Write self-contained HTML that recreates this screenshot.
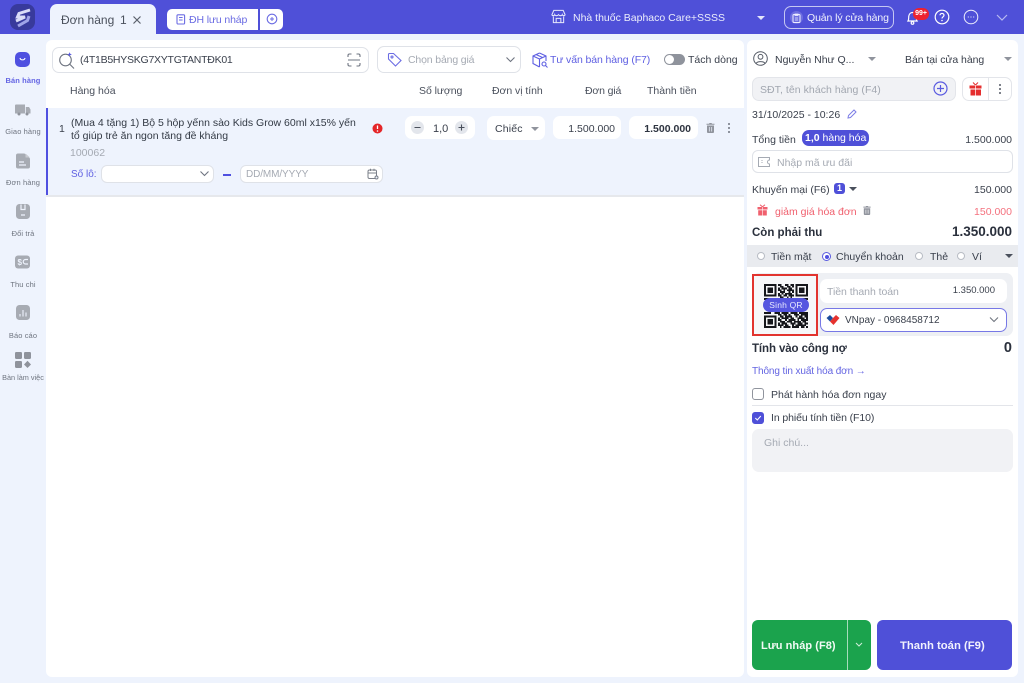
<!DOCTYPE html>
<html lang="vi"><head><meta charset="utf-8"><title>Đơn hàng</title>
<style>
*{box-sizing:border-box}
html,body{margin:0;padding:0}
body{width:1024px;height:683px;overflow:hidden;position:relative;background:#eef3fd;font-family:"Liberation Sans","Noto Sans CJK SC",sans-serif;color:#333a45;font-size:11px}
.a,.t{position:absolute}
.t{white-space:nowrap;line-height:14px;letter-spacing:0}
svg{position:absolute;display:block}
.box{position:absolute;background:#fff;border-radius:6px}
.s{color:#6f7580;font-size:7.5px;text-align:center;width:46px;left:0;letter-spacing:.1px}
.g{color:#a5aab3}
.r{text-align:right}
.b{font-weight:bold}
</style></head><body>
<div class="a" style="left:0;top:0;width:1024px;height:34px;background:#4f50d8"></div>
<div class="a" style="left:10px;top:4px;width:25px;height:26px;border-radius:8px;background:#383a9c"></div>
<svg style="left:10px;top:4px" width="25" height="26" viewBox="0 0 25 26"><path d="M20 6 L9 9.500 L7.500 13 L15 13 L6 17" fill="none" stroke="#d9dcf7" stroke-width="3"/><path d="M19 12 L17.500 16.500 L8 22" fill="none" stroke="#9fa3e8" stroke-width="3"/></svg>
<div class="a" style="left:50px;top:4px;width:106px;height:31px;background:#eef3fd;border-radius:7px 7px 0 0"></div>
<div class="t" style="left:61px;top:13px;font-size:12px;color:#4a505c">Đơn hàng</div>
<div class="t" style="left:120px;top:13px;font-size:12px;color:#4a505c">1</div>
<svg style="left:131px;top:14px" width="12" height="12" viewBox="0 0 12 12"><path d="M2.500 2.500 9.500 9.500M9.500 2.500 2.500 9.500" stroke="#5a606c" stroke-width="1.200"/></svg>
<div class="box" style="left:167px;top:9px;width:91px;height:21px;border-radius:5px 0 0 5px"></div>
<div class="box" style="left:260px;top:9px;width:23px;height:21px;border-radius:0 5px 5px 0"></div>
<svg style="left:176px;top:14px" width="10" height="11" viewBox="0 0 10 11"><rect x="1" y=".8" width="7.600" height="9.200" rx="1" fill="none" stroke="#6b6ce3" stroke-width="1.100"/><path d="M3 3.500H6.600M3 6H6.600" stroke="#6b6ce3"/></svg>
<div class="t" style="left:189px;top:13px;font-size:10.500px;color:#6b6ce3;letter-spacing:-.12px">ĐH lưu nháp</div>
<svg style="left:266px;top:13px" width="12" height="12" viewBox="0 0 12 12"><circle cx="6" cy="6" r="4.800" fill="none" stroke="#6b6ce3" stroke-width="1.100"/><path d="M4 6H8M6 4V8" stroke="#6b6ce3"/></svg>

<svg style="left:551px;top:9px" width="15" height="15" viewBox="0 0 16 16" fill="none" stroke="#e6e8fb" stroke-width="1.100"><path d="M3 1.500H13L15 6C15 7.500 12.500 7.500 12 6C11.500 7.500 9 7.500 8 6C7 7.500 4.500 7.500 4 6C3.500 7.500 1 7.500 1 6Z"/><path d="M2.500 8V14.500H13.500V8M5.500 14.500V10H10.500V14.500"/></svg>
<div class="t" style="left:573px;top:11px;font-size:10.500px;color:#eceefc">Nhà thuốc Baphaco Care+SSSS</div>
<div class="a" style="left:757px;top:16px;border:4px solid transparent;border-top:4px solid #e4e6fa;border-bottom:0"></div>
<div class="a" style="left:784px;top:6px;width:110px;height:23px;border:1px solid #c5c7f2;border-radius:7px"></div>
<div class="a" style="left:790px;top:11px;width:13px;height:13px;border-radius:50%;background:#6e6fe0"></div>
<svg style="left:792px;top:13px" width="9" height="10" viewBox="0 0 9 10"><rect x="1" y="1.500" width="7" height="8" rx="1" fill="none" stroke="#eef" /><path d="M3 1H6V2.500H3ZM3 5H6M3 7H6" stroke="#eef" fill="#eef" stroke-width=".8"/></svg>
<div class="t" style="left:807px;top:11px;font-size:10.500px;color:#f1f2fd;letter-spacing:-.1px">Quản lý cửa hàng</div>
<svg style="left:906px;top:10px" width="13" height="15" viewBox="0 0 13 15" fill="none" stroke="#fff" stroke-width="1.200"><path d="M2 11C3 9.500 2.500 8 2.800 6C3.200 3.500 5 2.500 6.500 2.500S9.800 3.500 10.200 6C10.500 8 10 9.500 11 11Z"/><circle cx="6.500" cy="13" r="1.300"/></svg>
<div class="a b" style="left:913px;top:8px;width:16px;height:12px;background:#ee2230;border-radius:6px;color:#fff;font-size:7px;line-height:12px;text-align:center">99+</div>
<svg style="left:934px;top:9px" width="16" height="16" viewBox="0 0 16 16"><circle cx="8" cy="8" r="6.800" fill="none" stroke="#fff" stroke-width="1.200"/><path d="M6 6.300C6 3.800 10 3.900 10 6.300C10 7.800 8 7.800 8 9.500" fill="none" stroke="#fff" stroke-width="1.200"/><circle cx="8" cy="11.500" r=".8" fill="#fff"/></svg>
<svg style="left:963px;top:9px" width="16" height="16" viewBox="0 0 16 16"><circle cx="8" cy="8" r="6.800" fill="none" stroke="#f0f1fd" stroke-width="1"/><path d="M4.800 8H5.800M7.500 8H8.500M10.200 8H11.200" stroke="#f0f1fd" stroke-width="1.100"/></svg>
<svg style="left:995px;top:13px" width="14" height="9" viewBox="0 0 14 9"><path d="M2 2 7 7 12 2" fill="none" stroke="#b8baf0" stroke-width="1.200"/></svg>

<!-- sidebar -->
<div class="a" style="left:15px;top:52px;width:15px;height:15px;border-radius:5px;background:#4f50e0"></div>
<svg style="left:15px;top:52px" width="15" height="15" viewBox="0 0 15 15"><path d="M5 6C5.500 8.500 9.500 8.500 10 6" fill="none" stroke="#fff" stroke-width="1.100"/></svg>
<div class="t s b" style="top:74px;color:#6465e4">Bán hàng</div>
<svg style="left:15px;top:103px" width="16" height="14" viewBox="0 0 16 14"><path d="M0 2.500Q0 1.500 1 1.500H10V10.500H0ZM10.800 4H14L15.500 6.500V10.500H10.800Z" fill="#a7abb3"/><circle cx="4" cy="11" r="1.500" fill="#8f939c"/><circle cx="12" cy="11" r="1.500" fill="#8f939c"/></svg>
<div class="t s" style="top:125px">Giao hàng</div>
<svg style="left:16px;top:153px" width="14" height="16" viewBox="0 0 14 16"><path d="M2 .5H8.500L14 5.500V13.500Q14 15.500 12 15.500H2Q0 15.500 0 13.500V2.500Q0 .5 2 .5Z" fill="#a7abb3"/><path d="M3 9H8M3 12H10" stroke="#eef3fd" stroke-width="1.200"/><path d="M9.500 .5V4.500H14" fill="#c8cbd1"/></svg>
<div class="t s" style="top:176px">Đơn hàng</div>
<svg style="left:16px;top:204px" width="14" height="15" viewBox="0 0 14 15"><rect width="14" height="15" rx="3.500" fill="#a7abb3"/><path d="M5 .5V5.500H9V.5M5 11H9" stroke="#eef3fd" stroke-width="1.200" fill="none"/></svg>
<div class="t s" style="top:227px">Đổi trả</div>
<svg style="left:15px;top:255px" width="15" height="14" viewBox="0 0 15 14"><rect width="15" height="13" y=".5" rx="3" fill="#a7abb3"/><text x="2.500" y="10" font-size="8" font-weight="bold" fill="#eef3fd" font-family="Liberation Sans">$</text><path d="M13 4.500H10.500A2 2 0 0 0 10.500 9H13" fill="none" stroke="#eef3fd" stroke-width="1.200"/></svg>
<div class="t s" style="top:278px">Thu chi</div>
<svg style="left:16px;top:305px" width="14" height="15" viewBox="0 0 14 15"><rect width="14" height="15" rx="3.500" fill="#a7abb3"/><path d="M4 9V11.500M7 5V11.500M10 7.500V11.500" stroke="#eef3fd" stroke-width="1.100"/></svg>
<div class="t s" style="top:329px">Báo cáo</div>
<svg style="left:15px;top:352px" width="16" height="16" viewBox="0 0 16 16" fill="#8f939c"><rect width="7" height="7" rx="1.200"/><rect x="9" width="7" height="7" rx="1.200"/><rect y="9" width="7" height="7" rx="1.200"/><path d="M12.500 8.800 16 12.500 12.500 16 9 12.500Z"/></svg>
<div class="t s" style="top:371px;font-size:7.300px;letter-spacing:0">Bàn làm việc</div>

<!-- main -->
<div class="box" style="left:46px;top:40px;width:698px;height:637px"></div>
<div class="a" style="left:52px;top:47px;width:317px;height:26px;border:1px solid #dfe2e8;border-radius:7px;background:#fff"></div>
<svg style="left:58px;top:50px" width="20" height="20" viewBox="0 0 20 20" fill="none" stroke="#6e7480" stroke-width="1.100"><circle cx="7.500" cy="10" r="5.800"/><path d="M11.800 14.200 16 18.500"/><path d="M14 1.500 15 4 17.500 5 15 6 14 8.500 13 6 10.500 5 13 4Z" fill="#5a5be0" stroke="none" transform="translate(2.500 1.200) scale(.65)"/></svg>
<div class="t" style="left:80px;top:53px;font-size:10.500px;color:#3a404c;letter-spacing:-.25px">(4T1B5HYSKG7XYTGTANTĐK01</div>
<svg style="left:347px;top:53px" width="14" height="14" viewBox="0 0 14 14" fill="none" stroke="#6e7480" stroke-width="1.100"><path d="M1 4V2.500Q1 1 2.500 1H4.500M9.500 1H11.500Q13 1 13 2.500V4M1 10V11.500Q1 13 2.500 13H4.500M9.500 13H11.500Q13 13 13 11.500V10M1 7H13"/></svg>
<div class="a" style="left:377px;top:46px;width:144px;height:27px;border:1px solid #dfe2e8;border-radius:7px"></div>
<svg style="left:387px;top:52px" width="15" height="15" viewBox="0 0 15 15" fill="none" stroke="#6b6ce3" stroke-width="1.100"><path d="M1.500 2.500Q1.500 1.500 2.500 1.500H6.500L14 8.500 8.500 14 1.500 7Z"/><circle cx="5" cy="5" r="1"/></svg>
<div class="t g" style="left:408px;top:53px;font-size:10.500px;letter-spacing:-.15px">Chọn bảng giá</div>
<svg style="left:505px;top:56px" width="11" height="8" viewBox="0 0 11 8"><path d="M1.500 1.500 5.500 5.500 9.500 1.500" fill="none" stroke="#6e7480" stroke-width="1.100"/></svg>
<svg style="left:532px;top:52px" width="17" height="16" viewBox="0 0 17 16" fill="none" stroke="#5e5fe2" stroke-width="1.100"><path d="M7.500 1 14 4V9M7.500 1 1 4V11.500L7.500 15M1 4 7.500 7 14 4M7.500 7V15M4 2.500 10.500 5.500"/><circle cx="12" cy="12" r="2"/><path d="M13.500 13.500 15.500 15.500"/></svg>
<div class="t" style="left:550px;top:53px;font-size:10.500px;color:#5e5fe2;letter-spacing:-.1px">Tư vấn bán hàng (F7)</div>
<div class="a" style="left:664px;top:54px;width:21px;height:11px;border-radius:6px;background:#8f939c"></div>
<div class="a" style="left:665px;top:55px;width:9px;height:9px;border-radius:50%;background:#fff"></div>
<div class="t" style="left:688px;top:53px;font-size:10.500px;color:#3a404c">Tách dòng</div>

<div class="t" style="left:70px;top:84px;font-size:10.500px;color:#4a505c">Hàng hóa</div>
<div class="t" style="left:419px;top:84px;font-size:10.500px;color:#4a505c;letter-spacing:-.05px">Số lượng</div>
<div class="t" style="left:492px;top:84px;font-size:10.500px;color:#4a505c;letter-spacing:-.05px">Đơn vị tính</div>
<div class="t" style="left:585px;top:84px;font-size:10.500px;color:#4a505c;letter-spacing:-.15px">Đơn giá</div>
<div class="t" style="left:647px;top:84px;font-size:10.500px;color:#4a505c">Thành tiền</div>

<div class="a" style="left:46px;top:108px;width:698px;height:87px;background:#eef3fd"></div>
<div class="a" style="left:46px;top:108px;width:2px;height:87px;background:#4f50e0"></div>
<div class="a" style="left:46px;top:195px;width:698px;height:2px;background:#e6e8ec"></div>
<div class="t" style="left:59px;top:122px;font-size:10.500px;color:#3a404c">1</div>
<div class="t" style="left:71px;top:116px;font-size:10.500px;color:#333a45">(Mua 4 tặng 1) Bộ 5 hộp yếnn sào Kids Grow 60ml x15% yến</div>
<div class="t" style="left:71px;top:129px;font-size:10.500px;color:#333a45">tổ giúp trẻ ăn ngon tăng đề kháng</div>
<div class="t g" style="left:70px;top:146px;font-size:10.500px">100062</div>
<div class="t" style="left:71px;top:168px;font-size:10px;color:#5e5fe2">Số lô:</div>
<div class="box" style="left:101px;top:165px;width:113px;height:18px;border:1px solid #dfe2e8"></div>
<svg style="left:199px;top:170px" width="11" height="8" viewBox="0 0 11 8"><path d="M1.500 1.500 5.500 5.500 9.500 1.500" fill="none" stroke="#6e7480" stroke-width="1.100"/></svg>
<div class="a" style="left:223px;top:174px;width:8px;height:1.500px;background:#4f50e0"></div>
<div class="box" style="left:240px;top:165px;width:143px;height:18px;border:1px solid #dfe2e8"></div>
<div class="t" style="left:246px;top:168px;font-size:10px;color:#a5aab3;letter-spacing:-.1px">DD/MM/YYYY</div>
<svg style="left:367px;top:168px" width="12" height="12" viewBox="0 0 12 12" fill="none" stroke="#7b808a"><rect x="1" y="2" width="8.500" height="8.500" rx="1.500"/><path d="M1 5H9.500M3.500 .8V3M7 .8V3"/><circle cx="9.500" cy="9.500" r="1.500" fill="#eef3fd"/></svg>
<svg style="left:372px;top:123px" width="11" height="11" viewBox="0 0 11 11"><circle cx="5.500" cy="5.500" r="5" fill="#e42528"/><path d="M5.500 2.500V6" stroke="#fff" stroke-width="1.300"/><circle cx="5.500" cy="8" r=".8" fill="#fff"/></svg>

<div class="box" style="left:405px;top:116px;width:70px;height:23px;border-radius:7px"></div>
<div class="a" style="left:411px;top:121px;width:13px;height:13px;border-radius:50%;background:#e3e6ec"></div>
<div class="a" style="left:455px;top:121px;width:13px;height:13px;border-radius:50%;background:#e3e6ec"></div>
<svg style="left:411px;top:121px" width="57" height="13" viewBox="0 0 57 13"><path d="M3.500 6.500H9.500M47.500 6.500H53.500M50.500 3.500V9.500" stroke="#4a505c" stroke-width="1.100"/></svg>
<div class="t" style="left:433px;top:122px;font-size:11px;color:#3a404c">1,0</div>
<div class="box" style="left:487px;top:116px;width:58px;height:24px;border-radius:7px"></div>
<div class="t" style="left:495px;top:122px;font-size:10.500px;color:#3a404c;letter-spacing:.15px">Chiếc</div>
<div class="a" style="left:531px;top:127px;border:4px solid transparent;border-top:4px solid #90949d;border-bottom:0"></div>
<div class="box" style="left:553px;top:116px;width:68px;height:23px;border-radius:7px"></div>
<div class="t r" style="right:409px;top:122px;font-size:10.500px;color:#3a404c">1.500.000</div>
<div class="box" style="left:629px;top:116px;width:69px;height:23px;border-radius:7px"></div>
<div class="t r b" style="right:333px;top:122px;font-size:10.500px;color:#2e3440">1.500.000</div>
<svg style="left:705px;top:122px" width="11" height="12" viewBox="0 0 11 12" fill="#90949d"><path d="M2 3.500H9V10Q9 11 8 11H3Q2 11 2 10ZM1.500 1.800H4L4.500 1H6.500L7 1.800H9.500V2.800H1.500Z"/><path d="M4.300 5V9.500M6.700 5V9.500" stroke="#eef3fd" stroke-width=".7"/></svg>
<svg style="left:726px;top:122px" width="6" height="12" viewBox="0 0 6 12" fill="#70757f"><circle cx="3" cy="2" r="1"/><circle cx="3" cy="6" r="1"/><circle cx="3" cy="10" r="1"/></svg>

<!-- right panel -->
<div class="box" style="left:747px;top:40px;width:271px;height:637px"></div>
<svg style="left:753px;top:51px" width="15" height="15" viewBox="0 0 15 15" fill="none" stroke="#555b66" stroke-width="1"><circle cx="7.500" cy="7.500" r="6.800"/><circle cx="7.500" cy="5.800" r="2.400"/><path d="M3.200 12.300C4.500 10 10.500 10 11.800 12.300"/></svg>
<div class="t" style="left:775px;top:53px;font-size:10.500px;color:#3a404c">Nguyễn Như Q...</div>
<div class="a" style="left:868px;top:57px;border:4px solid transparent;border-top:4px solid #90949d;border-bottom:0"></div>
<div class="t" style="left:905px;top:53px;font-size:10.500px;color:#3a404c;letter-spacing:-.05px">Bán tại cửa hàng</div>
<div class="a" style="left:1004px;top:57px;border:4px solid transparent;border-top:4px solid #90949d;border-bottom:0"></div>
<div class="a" style="left:752px;top:77px;width:204px;height:24px;border-radius:7px;background:#f1f2f5;border:1px solid #e3e5ea"></div>
<div class="t" style="left:760px;top:83px;font-size:10.500px;color:#a2a7b0;letter-spacing:.05px">SĐT, tên khách hàng (F4)</div>
<svg style="left:933px;top:81px" width="15" height="15" viewBox="0 0 15 15" fill="none" stroke="#5a5be0" stroke-width="1.200"><circle cx="7.500" cy="7.500" r="6.500"/><path d="M4 7.500H11M7.500 4V11"/></svg>
<div class="a" style="left:962px;top:77px;width:50px;height:24px;border-radius:7px;border:1px solid #e3e5ea"></div>
<div class="a" style="left:988px;top:78px;width:1px;height:22px;background:#e3e5ea"></div>
<svg style="left:969px;top:82px" width="13" height="14" viewBox="0 0 13 14" fill="#e52e2e"><path d="M.5 3.500H12.500V6.500H.5ZM1.500 7.500H12V13.500H1.500Z"/><path d="M4 .5 6.500 3 9 .5" fill="none" stroke="#e52e2e"/><path d="M6.500 3V13.500" stroke="#fff" stroke-width=".7"/></svg>
<svg style="left:997px;top:83px" width="6" height="12" viewBox="0 0 6 12" fill="#555b66"><circle cx="3" cy="2" r="1"/><circle cx="3" cy="6" r="1"/><circle cx="3" cy="10" r="1"/></svg>
<div class="t" style="left:752px;top:108px;font-size:10.500px;color:#3a404c">31/10/2025 - 10:26</div>
<svg style="left:846px;top:108px" width="12" height="12" viewBox="0 0 12 12" fill="none" stroke="#7c7de6"><path d="M2 10 2.500 7.500 8 2 10 4 4.500 9.500Z"/></svg>
<div class="t" style="left:752px;top:133px;font-size:10.500px;color:#3a404c">Tổng tiền</div>
<div class="a" style="left:802px;top:130px;width:67px;height:16px;border-radius:7px;background:#4f50d8"></div>
<div class="t" style="left:805px;top:131px;font-size:10.500px;color:#fff"><b>1,0</b> hàng hóa</div>
<div class="t r" style="right:12px;top:133px;font-size:10.500px;color:#3a404c">1.500.000</div>
<div class="a" style="left:752px;top:150px;width:261px;height:23px;border-radius:6px;border:1px solid #dfe2e8"></div>
<svg style="left:758px;top:157px" width="12" height="10" viewBox="0 0 12 10" fill="none" stroke="#a5aab3"><path d="M.5 .5H11.500V3A2 2 0 0 0 11.500 7V9.500H.5Z"/><path d="M4 3V7" stroke-dasharray="1 1"/></svg>
<div class="t g" style="left:777px;top:156px;font-size:10.500px">Nhập mã ưu đãi</div>
<div class="t" style="left:752px;top:183px;font-size:10.500px;color:#3a404c">Khuyến mại (F6)</div>
<div class="a b" style="left:834px;top:183px;width:11px;height:11px;border-radius:3px;background:#4f50d8;color:#fff;font-size:9px;line-height:11px;text-align:center">1</div>
<div class="a" style="left:849px;top:187px;border:4px solid transparent;border-top:4px solid #4a505c;border-bottom:0"></div>
<div class="t r" style="right:12px;top:183px;font-size:10.500px;color:#3a404c">150.000</div>
<svg style="left:757px;top:204px" width="11" height="12" viewBox="0 0 11 12" fill="#f0606e"><path d="M.5 3H10.500V5.500H.5ZM1.200 6.300H9.800V11.500H1.200Z"/><path d="M3 .7 5.500 2.800 8 .7" fill="none" stroke="#f0606e"/><path d="M5.500 3V11.500" stroke="#fff" stroke-width=".6"/></svg>
<div class="t" style="left:775px;top:205px;font-size:10.500px;color:#f0606e">giảm giá hóa đơn</div>
<svg style="left:862px;top:205px" width="10" height="11" viewBox="0 0 11 12" fill="#90949d"><path d="M2 3.500H9V10Q9 11 8 11H3Q2 11 2 10ZM1.500 1.800H4L4.500 1H6.500L7 1.800H9.500V2.800H1.500Z"/><path d="M4.300 5V9.500M6.700 5V9.500" stroke="#fff" stroke-width=".7"/></svg>
<div class="t r" style="right:12px;top:205px;font-size:10.500px;color:#f4717e">150.000</div>
<div class="t b" style="left:752px;top:226px;font-size:11.500px;color:#2a303c">Còn phải thu</div>
<div class="t r b" style="right:12px;top:225px;font-size:13.500px;color:#2a303c">1.350.000</div>
<div class="a" style="left:747px;top:245px;width:271px;height:22px;background:#e9ebef"></div>
<div class="a" style="left:757px;top:252px;width:8px;height:8px;border-radius:50%;background:#fff;border:1px solid #b8bcc4"></div>
<div class="t" style="left:771px;top:250px;font-size:10.500px;color:#3a404c">Tiền mặt</div>
<div class="a" style="left:822px;top:252px;width:9px;height:9px;border-radius:50%;background:#fff;border:1px solid #5a5be0"></div>
<div class="a" style="left:824.500px;top:254.500px;width:4px;height:4px;border-radius:50%;background:#4f50e0"></div>
<div class="t" style="left:836px;top:250px;font-size:10.500px;color:#3a404c">Chuyển khoản</div>
<div class="a" style="left:915px;top:252px;width:8px;height:8px;border-radius:50%;background:#fff;border:1px solid #b8bcc4"></div>
<div class="t" style="left:930px;top:250px;font-size:10.500px;color:#3a404c">Thẻ</div>
<div class="a" style="left:957px;top:252px;width:8px;height:8px;border-radius:50%;background:#fff;border:1px solid #b8bcc4"></div>
<div class="t" style="left:972px;top:250px;font-size:10.500px;color:#3a404c">Ví</div>
<div class="a" style="left:1005px;top:254px;border:4px solid transparent;border-top:4px solid #4a505c;border-bottom:0"></div>

<div class="a" style="left:752px;top:273px;width:261px;height:63px;border-radius:7px;background:#eef0f4"></div>
<div class="a" style="left:752px;top:274px;width:66px;height:62px;border:2px solid #e2342f;background:#f6f7f9"></div>
<svg style="left:764px;top:284px" width="44" height="44" viewBox="0 0 25 25" shape-rendering="crispEdges"><g fill="#15171c"><path fill-rule="evenodd" d="M0 0H7V7H0ZM1 1V6H6V1ZM2 2H5V5H2ZM18 0H25V7H18ZM19 1V6H24V1ZM20 2H23V5H20ZM0 18H7V25H0ZM1 19V24H6V19ZM2 20H5V23H2Z"/></g><path stroke="#15171c" stroke-width="1" fill="none" d="M8 .5h2M12 .5h2M15 .5h2M9 1.500h2M13 1.500h2M16 1.500h1M8 2.500h1M10 2.500h3M14 2.500h2M8 3.500h2M11 3.500h1M13 3.500h4M9 4.500h3M14 4.500h1M16 4.500h1M8 5.500h1M10 5.500h1M12 5.500h4M8 6.500h2M11 6.500h2M14 6.500h3M9 7.500h2M13 7.500h1M15 7.500h1M0 8.500h3M5 8.500h2M8 8.500h4M14 8.500h3M18 8.500h3M22 8.500h3M0 16.500h4M6 16.500h3M10 16.500h4M15 16.500h4M20 16.500h5M8 17.500h2M11 17.500h2M14 17.500h1M17 17.500h3M21 17.500h4M9 18.500h2M12 18.500h4M18 18.500h1M20 18.500h2M23 18.500h2M8 19.500h1M10 19.500h4M15 19.500h2M19 19.500h4M24 19.500h1M8 20.500h2M12 20.500h1M14 20.500h4M19 20.500h1M21 20.500h4M9 21.500h3M13 21.500h3M17 21.500h4M22 21.500h2M8 22.500h1M10 22.500h3M15 22.500h3M19 22.500h3M23 22.500h2M8 23.500h3M12 23.500h2M16 23.500h1M18 23.500h6M9 24.500h1M11 24.500h4M16 24.500h4M21 24.500h2M24 24.500h1"/></svg>
<div class="a" style="left:763px;top:298px;width:46px;height:14px;border-radius:8px;background:#5556e0;color:#e9eaff;font-size:8.500px;line-height:14px;text-align:center;letter-spacing:.2px">Sinh QR</div>
<div class="box" style="left:820px;top:279px;width:187px;height:24px;border-radius:7px"></div>
<div class="t g" style="left:827px;top:285px;font-size:10.500px;letter-spacing:-.05px">Tiền thanh toán</div>
<div class="t r" style="right:29px;top:284px;font-size:9.500px;color:#3a404c">1.350.000</div>
<div class="box" style="left:820px;top:308px;width:187px;height:24px;border-radius:7px;border:1px solid #7778e6"></div>
<svg style="left:826px;top:314px" width="14" height="12" viewBox="0 0 14 12"><path d="M.5 4 4 1 7 4 4 7.500Z" fill="#1b4c9c"/><path d="M4 7.500 7 4 10 1 13.500 4 7.500 11Z" fill="#e6322e"/></svg>
<div class="t" style="left:845px;top:313.500px;font-size:10px;color:#3a404c">VNpay - 0968458712</div>
<svg style="left:988px;top:316px" width="12" height="8" viewBox="0 0 12 8"><path d="M2 1.500 6 5.500 10 1.500" fill="none" stroke="#70757f" stroke-width="1.100"/></svg>

<div class="t b" style="left:752px;top:342px;font-size:11.500px;color:#2a303c;letter-spacing:-.1px">Tính vào công nợ</div>
<div class="t r b" style="right:12px;top:341px;font-size:14.500px;color:#2a303c">0</div>
<div class="t" style="left:752px;top:365px;font-size:10px;color:#6364e2;letter-spacing:-.1px">Thông tin xuất hóa đơn →</div>
<div class="a" style="left:752px;top:388px;width:12px;height:12px;border-radius:3px;border:1px solid #90949d;background:#fff"></div>
<div class="t" style="left:771px;top:388px;font-size:10.500px;color:#3a404c">Phát hành hóa đơn ngay</div>
<div class="a" style="left:752px;top:405px;width:261px;height:1px;background:#e3e5ea"></div>
<div class="a" style="left:752px;top:412px;width:12px;height:12px;border-radius:3px;background:#4f50d8"></div>
<svg style="left:752px;top:412px" width="12" height="12" viewBox="0 0 12 12"><path d="M3.300 6 5.300 8 8.800 4" fill="none" stroke="#fff"/></svg>
<div class="t" style="left:771px;top:411px;font-size:10.500px;color:#3a404c;letter-spacing:-.1px">In phiếu tính tiền (F10)</div>
<div class="a" style="left:752px;top:429px;width:261px;height:43px;border-radius:7px;background:#f1f2f5"></div>
<div class="t g" style="left:764px;top:436px;font-size:10.500px">Ghi chú...</div>

<div class="a" style="left:752px;top:620px;width:119px;height:50px;border-radius:6px;background:#1ba34d"></div>
<div class="a" style="left:847px;top:620px;width:1px;height:50px;background:#a8dcbc"></div>
<div class="t b" style="left:761px;top:638.500px;font-size:11px;color:#f2fbf5;letter-spacing:.05px">Lưu nháp (F8)</div>
<svg style="left:854px;top:641px" width="10" height="8" viewBox="0 0 10 8"><path d="M2 2 5 5 8 2" fill="none" stroke="#d0eedb"/></svg>
<div class="a" style="left:877px;top:620px;width:135px;height:50px;border-radius:6px;background:#4f50d8"></div>
<div class="t b" style="left:900px;top:638.500px;font-size:11.300px;color:#f2f2fd">Thanh toán (F9)</div>
</body></html>
